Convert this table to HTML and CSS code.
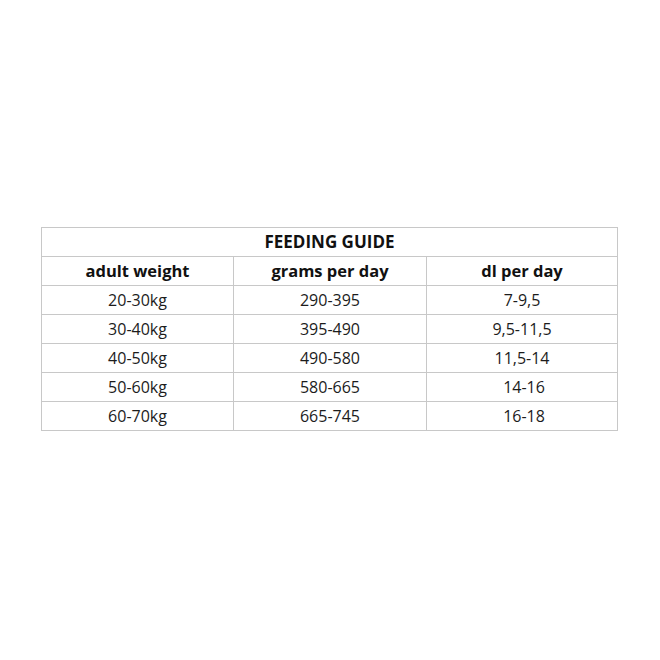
FILE: index.html
```html
<!DOCTYPE html>
<html lang="en">
<head>
<meta charset="utf-8">
<title>Feeding guide</title>
<link rel="stylesheet" href="styles.css">
</head>
<body>
<main class="page">
  <table class="guide">
    <colgroup>
      <col class="c1"><col class="c2"><col class="c3">
    </colgroup>
    <thead>
      <tr class="title-row"><th colspan="3" class="title">FEEDING GUIDE</th></tr>
      <tr class="head-row"><th>adult weight</th><th>grams per day</th><th>dl per day</th></tr>
    </thead>
    <tbody>
      <tr><td>20-30kg</td><td>290-395</td><td>7-9,5</td></tr>
      <tr><td>30-40kg</td><td>395-490</td><td>9,5-11,5</td></tr>
      <tr><td>40-50kg</td><td>490-580</td><td>11,5-14</td></tr>
      <tr><td>50-60kg</td><td>580-665</td><td class="shift">14-16</td></tr>
      <tr><td>60-70kg</td><td>665-745</td><td class="shift">16-18</td></tr>
    </tbody>
  </table>
</main>
</body>
</html>
```

FILE: styles.css
```css
html, body {
  margin: 0;
  padding: 0;
  background: #ffffff;
}

.page {
  width: 660px;
  height: 660px;
  box-sizing: border-box;
  padding: 227px 0 0 41px;
  font-family: "Open Sans", "Liberation Sans", sans-serif;
  color: #1c1c1c;
}

.guide {
  border-collapse: collapse;
  table-layout: fixed;
  width: 576px;
}

.c1 { width: 192px; }
.c2 { width: 193px; }
.c3 { width: 191px; }

.guide th,
.guide td {
  border: 1px solid #c8c8c8;
  height: 29px;
  padding: 0 0 3px 0;
  box-sizing: border-box;
  text-align: center;
  vertical-align: bottom;
  line-height: 22px;
  font-size: 16px;
  font-weight: 400;
}

.guide th {
  font-weight: 700;
  font-size: 16.5px;
  color: #111111;
}

.guide th.title {
  font-size: 17px;
}

.guide td.shift {
  padding-left: 4px;
}
```
